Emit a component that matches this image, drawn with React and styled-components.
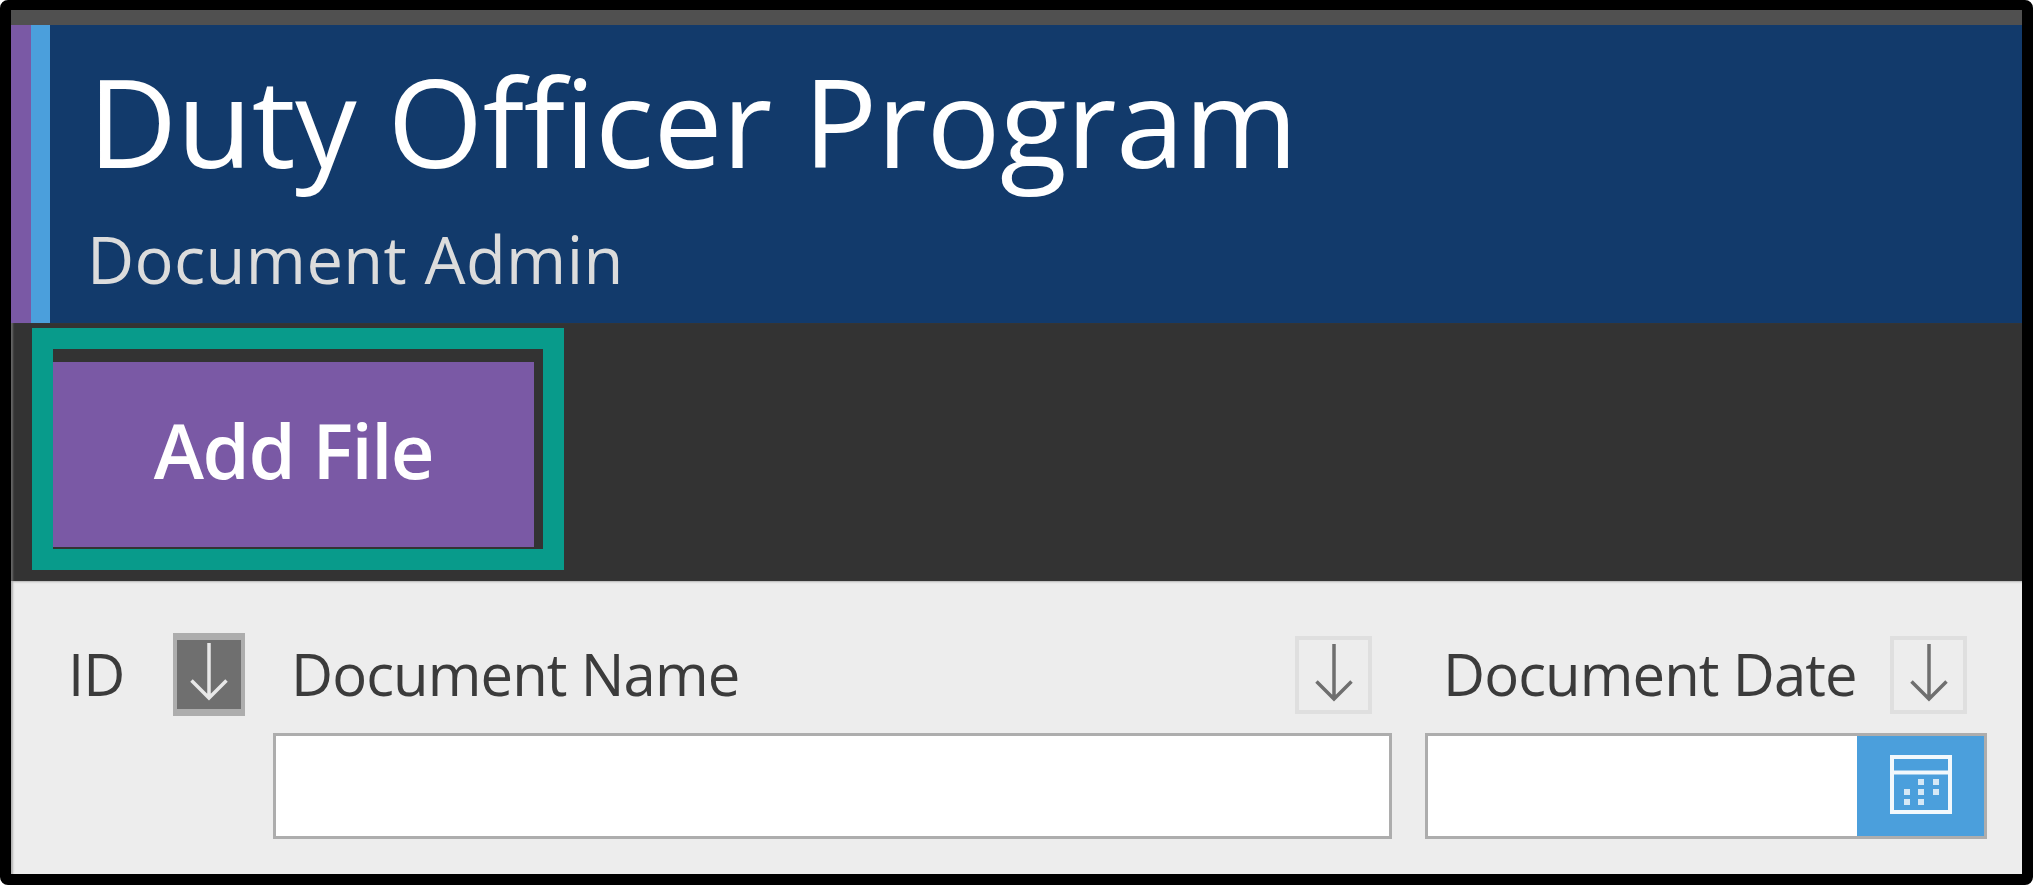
import styled, { createGlobalStyle } from 'styled-components'

const GlobalStyle = createGlobalStyle`
	html, body {
		margin: 0;
		background-color: #fff;
	}
`

const ArrowIcon = ({ color }) => (
	<svg width="38" height="58" viewBox="0 0 38 58" fill="none" stroke={color} strokeWidth="3.5">
		<path d="M19 0V55M1.5 37.5L19 55L36.5 37.5" />
	</svg>
)

const CalendarIcon = () => (
	<svg width="62" height="59" viewBox="0 0 62 59" fill="none">
		<rect x="2" y="2" width="58" height="55" stroke="#f2f8fc" strokeWidth="4" />
		<path d="M2 17.5H60" stroke="#f2f8fc" strokeWidth="4" />
		<g fill="#d5e8f6">
			<rect x="28" y="24" width="6" height="6" />
			<rect x="43" y="24" width="6" height="6" />
			<rect x="14" y="34" width="6" height="6" />
			<rect x="28" y="34" width="6" height="6" />
			<rect x="43" y="34" width="6" height="6" />
			<rect x="14" y="44" width="6" height="6" />
			<rect x="28" y="44" width="6" height="6" />
		</g>
	</svg>
)

const App = () => {
	return (
		<Frame>
			<GlobalStyle />
			<TopStrip />
			<Header>
				<Stripe $color="#7a59a5" $width={20} />
				<Stripe $color="#4b9fdc" $width={19} />
				<HeaderText>
					<Title>Duty Officer Program</Title>
					<Subtitle>Document Admin</Subtitle>
				</HeaderText>
			</Header>
			<Toolbar>
				<Highlight>
					<AddButton>Add File</AddButton>
				</Highlight>
			</Toolbar>
			<FilterPanel>
				<IdColumn>
					<IdLabel>ID</IdLabel>
					<SortButton $active>
						<ArrowIcon color="#e8e8e8" />
					</SortButton>
				</IdColumn>
				<NameColumn>
					<HeadRow>
						<Label>Document Name</Label>
						<SortButton>
							<ArrowIcon color="#6f6f6f" />
						</SortButton>
					</HeadRow>
					<TextInput />
				</NameColumn>
				<DateColumn>
					<HeadRow>
						<Label>Document Date</Label>
						<SortButton>
							<ArrowIcon color="#6f6f6f" />
						</SortButton>
					</HeadRow>
					<DateField>
						<DateInput />
						<CalendarButton>
							<CalendarIcon />
						</CalendarButton>
					</DateField>
				</DateColumn>
			</FilterPanel>
		</Frame>
	)
}

const Frame = styled.div`
	box-sizing: border-box;
	width: 2033px;
	height: 885px;
	border-style: solid;
	border-color: #000;
	border-width: 10px 11px 11px 11px;
	border-radius: 8px;
	display: flex;
	flex-direction: column;
	overflow: hidden;
	font-family: "Open Sans", "Noto Sans", sans-serif;
`

const TopStrip = styled.div`
	height: 15px;
	background-color: #505050;
`

const Header = styled.div`
	height: 298px;
	display: flex;
	background-color: #123a6b;
`

const Stripe = styled.div`
	width: ${(p) => p.$width}px;
	background-color: ${(p) => p.$color};
`

const HeaderText = styled.div`
	padding-left: 38px;
	display: flex;
	flex-direction: column;
`

const Title = styled.div`
	margin-top: 29px;
	font-size: 123px;
	line-height: 134px;
	letter-spacing: -0.5px;
	color: #fff;
	white-space: nowrap;
`

const Subtitle = styled.div`
	margin-top: 33px;
	margin-left: -1px;
	font-size: 65px;
	line-height: 76px;
	letter-spacing: 0.4px;
	color: #dcdcdc;
	white-space: nowrap;
`

const Toolbar = styled.div`
	box-sizing: border-box;
	height: 258px;
	padding: 5px 0 0 21px;
	background-color: #333;
	box-shadow: inset 3px 0 2px -1px #666;
`

const Highlight = styled.div`
	box-sizing: border-box;
	width: 532px;
	height: 242px;
	border: 21px solid #089b8b;
	background-color: #333;
	padding: 13px 9px 2px 0;
`

const AddButton = styled.div`
	width: 100%;
	height: 100%;
	display: flex;
	align-items: center;
	justify-content: center;
	padding-bottom: 10px;
	box-sizing: border-box;
	background-color: #7a59a5;
	color: #fff;
	font-size: 76px;
	font-weight: 600;
	letter-spacing: -1.5px;
`

const FilterPanel = styled.div`
	flex: 1;
	display: flex;
	padding: 52px 0 0 61px;
	background-color: #ededed;
	box-shadow: inset 3px 2px 2px -1px #b4b4b4;
`

const IdColumn = styled.div`
	width: 173px;
	height: 83px;
	display: flex;
	align-items: center;
	justify-content: space-between;
`

const NameColumn = styled.div`
	width: 1119px;
	margin-left: 28px;
	display: flex;
	flex-direction: column;
	gap: 17px;
`

const DateColumn = styled.div`
	width: 562px;
	margin-left: 33px;
	display: flex;
	flex-direction: column;
	gap: 17px;
`

const HeadRow = styled.div`
	height: 83px;
	padding: 0 20px;
	display: flex;
	align-items: center;
	justify-content: space-between;
`

const Label = styled.span`
	margin-left: -2px;
	padding-bottom: 3px;
	font-size: 58px;
	letter-spacing: -0.9px;
	color: #3b3b3b;
	white-space: nowrap;
`

const IdLabel = styled(Label)`
	margin-left: -4px;
`

const SortButton = styled.div`
	box-sizing: border-box;
	width: ${(p) => (p.$active ? 72 : 77)}px;
	height: ${(p) => (p.$active ? 83 : 78)}px;
	display: flex;
	align-items: flex-start;
	justify-content: center;
	padding-top: ${(p) => (p.$active ? 3 : 4)}px;
	background-color: ${(p) => (p.$active ? '#6f6f6f' : '#ededed')};
	border-style: solid;
	border-color: ${(p) => (p.$active ? '#adadad' : '#dfdfdf')};
	border-width: ${(p) => (p.$active ? '7px 4px' : '4px')};
`

const TextInput = styled.div`
	box-sizing: border-box;
	height: 106px;
	background-color: #fff;
	border: 3px solid #adadad;
`

const DateField = styled.div`
	box-sizing: border-box;
	height: 106px;
	display: flex;
	border: 3px solid #adadad;
`

const DateInput = styled.div`
	flex: 1;
	background-color: #fff;
`

const CalendarButton = styled.div`
	width: 127px;
	display: flex;
	align-items: center;
	justify-content: center;
	padding-bottom: 4px;
	background-color: #4b9fdc;
`

export default App
